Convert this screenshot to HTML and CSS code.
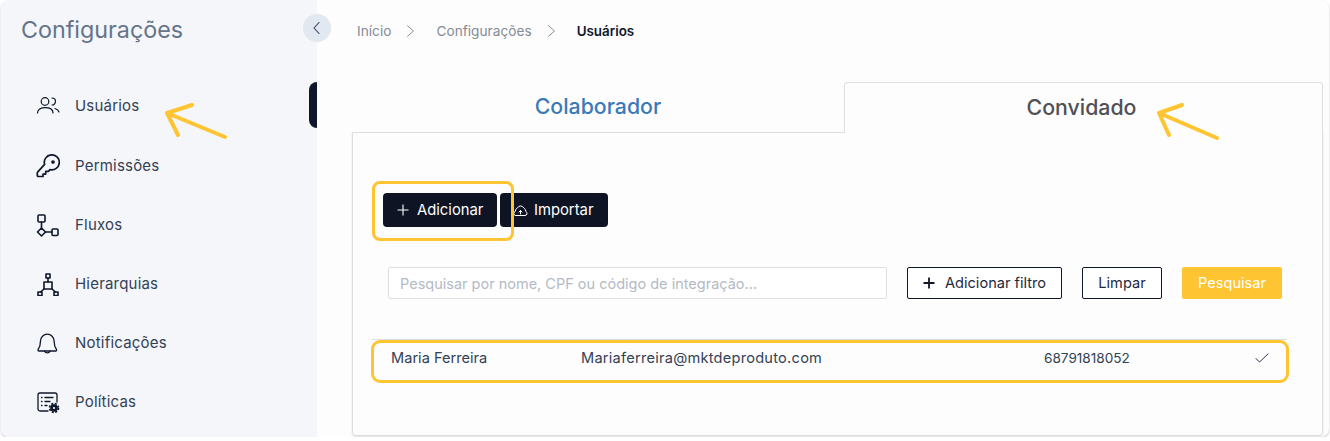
FILE: index.html
```html
<!DOCTYPE html>
<html lang="pt-BR">
<head>
    <meta charset="UTF-8">
    <title>Configurações - Usuários</title>
    <link rel="stylesheet" href="styles.css">
</head>
<body>
    <div class="app">
        <aside class="sidebar">
            <h2 class="sidebar-title">Configurações</h2>
            <span class="active-mark"></span>
            <button class="collapse-btn">
                <svg width="14" height="14" viewBox="0 0 14 14" fill="none" stroke="#334155" stroke-width="1.1" stroke-linecap="round" stroke-linejoin="round"><path d="M9 1.5 4 7l5 5.5"/></svg>
            </button>
            <ul class="nav">
                <li class="nav-item">
                    <svg class="nav-icon" viewBox="0 0 24 24" fill="none" stroke="#0f172a" stroke-width="1.2" stroke-linecap="round" stroke-linejoin="round"><circle cx="9" cy="7.500" r="3.800"/><path d="M1.500 19c0-3.500 3.300-5.300 7.700-5.300S17 15.500 17 19"/><path d="M16 4a3.500 3.500 0 0 1 0 7"/><path d="M19 14.500c2 .6 3.500 1.800 4 3.500"/></svg>
                    <span>Usuários</span>
                </li>
                <li class="nav-item">
                    <svg class="nav-icon" viewBox="0 0 24 24" fill="none" stroke="#0f172a" stroke-width="1.700" stroke-linecap="round" stroke-linejoin="round"><path d="M8.600 10.400a7.500 7.500 0 1 1 5.400 5.200l-1.600 1.800H9.700v2.700H7v2.400H2.300a1 1 0 0 1-1-1v-2.700a1 1 0 0 1 .3-.7z"/><circle cx="17" cy="8" r="1" fill="#0f172a"/></svg>
                    <span>Permissões</span>
                </li>
                <li class="nav-item">
                    <svg class="nav-icon" viewBox="0 0 24 24" fill="none" stroke="#0f172a" stroke-width="1.600" stroke-linecap="round" stroke-linejoin="round"><rect x="2" y="2" width="7" height="7" rx="1"/><path d="M5.500 9v6"/><path d="M5.500 15l4 4-4 4-4-4z"/><path d="M9.500 19H16"/><rect x="16" y="16" width="6" height="6.500" rx="1"/></svg>
                    <span>Fluxos</span>
                </li>
                <li class="nav-item">
                    <svg class="nav-icon" viewBox="0 0 24 24" fill="none" stroke="#0f172a" stroke-width="1.600" stroke-linecap="round" stroke-linejoin="round"><rect x="10" y="2" width="4" height="4"/><path d="M12 6v4"/><rect x="8" y="10" width="8" height="7"/><path d="M8 17l-3.500 3"/><path d="M16 17l3.500 3"/><rect x="2" y="20" width="4" height="3.500"/><rect x="18" y="20" width="4" height="3.500"/></svg>
                    <span>Hierarquias</span>
                </li>
                <li class="nav-item">
                    <svg class="nav-icon" viewBox="0 0 24 24" fill="none" stroke="#0f172a" stroke-width="1.300" stroke-linecap="round" stroke-linejoin="round"><path d="M4.500 10a6.800 6.800 0 0 1 13.600 0c0 5 1.300 7 2.400 8.500.4.600 0 1.500-.8 1.500H2.900c-.8 0-1.200-.9-.8-1.500C3.200 17 4.500 15 4.500 10z"/><path d="M8.500 20a3 3 0 0 0 5.600 0"/></svg>
                    <span>Notificações</span>
                </li>
                <li class="nav-item">
                    <svg class="nav-icon" viewBox="0 0 24 24" fill="none" stroke="#0f172a" stroke-width="1.300" stroke-linecap="round" stroke-linejoin="round"><path d="M12 21H4a2 2 0 0 1-2-2V5a2 2 0 0 1 2-2h15a2 2 0 0 1 2 2v7"/><path d="M9 7.500h8M9 11.500h5M9 15.500h2"/><path d="M5.500 7.500h.5M5.500 11.500h.5M5.500 15.500h.5"/><circle cx="18" cy="18" r="3.800" fill="#0f172a" stroke="none"/><circle cx="18" cy="18" r="4.400" stroke-width="1.800" stroke-dasharray="2 1.500" stroke-linecap="butt"/><circle cx="18" cy="18" r="1.100" fill="#f4f6f9" stroke="none"/></svg>
                    <span>Políticas</span>
                </li>
            </ul>
        </aside>

        <main class="main">
            <nav class="breadcrumb">
                <span>Início</span>
                <svg class="crumb-sep" viewBox="0 0 10 12" fill="none" stroke="#8a8f99" stroke-width="1" stroke-linecap="round" stroke-linejoin="round"><path d="M1.500 .7 7.500 6l-6 5.300"/></svg>
                <span>Configurações</span>
                <svg class="crumb-sep" viewBox="0 0 10 12" fill="none" stroke="#8a8f99" stroke-width="1" stroke-linecap="round" stroke-linejoin="round"><path d="M1.500 .7 7.500 6l-6 5.300"/></svg>
                <strong>Usuários</strong>
            </nav>

            <div class="tabs">
                <div class="tab tab-off">Colaborador</div>
                <div class="tab tab-on">Convidado</div>
            </div>

            <section class="panel">
                <div class="actions">
                    <button class="btn-dark btn-add">
                        <svg width="12" height="12" viewBox="0 0 12 12" stroke="#fff" stroke-width="1.100"><path d="M6 .5v11M.5 6h11"/></svg>
                        Adicionar
                    </button>
                    <button class="btn-dark btn-import">
                        <svg width="15" height="13" viewBox="0 0 15 13" fill="none" stroke="#fff" stroke-width="1" stroke-linejoin="round" stroke-linecap="round"><path d="M4 11.500H2.800a2 2 0 0 1-.6-3.900 4 4 0 0 1 2.300-3.700A3.500 3.500 0 0 1 10.800 4a3.800 3.800 0 0 1 2 3.500 2.100 2.100 0 0 1-.8 4H11"/><path d="M3 11.500h9"/><path d="M7.500 10V6.500M6 8l1.500-1.500L9 8"/></svg>
                        Importar
                    </button>
                </div>

                <div class="filters">
                    <input class="search" type="text" placeholder="Pesquisar por nome, CPF ou código de integração...">
                    <button class="btn-line btn-filter">
                        <svg width="12" height="12" viewBox="0 0 12 12" stroke="#0f172a" stroke-width="1.800"><path d="M6 .5v11M.5 6h11"/></svg>
                        Adicionar filtro
                    </button>
                    <button class="btn-line btn-clear">Limpar</button>
                    <button class="btn-search">Pesquisar</button>
                </div>

                <div class="user-row">
                    <span class="col-name">Maria Ferreira</span>
                    <span class="col-mail">Mariaferreira@mktdeproduto.com</span>
                    <span class="col-cpf">68791818052</span>
                    <svg class="col-check" width="14" height="10" viewBox="0 0 14 10" fill="none" stroke="#2d2f4a" stroke-width="1" stroke-linecap="round" stroke-linejoin="round"><path d="M1 5.500 4.500 9 13 1"/></svg>
                </div>
            </section>
        </main>

        <!-- marcacoes amarelas por cima da tela -->
        <span class="mark mark-add"></span>
        <span class="mark mark-row"></span>
        <svg class="arrow arrow-users" width="64" height="40" viewBox="0 0 64 40" fill="none" stroke="#ffc431" stroke-width="4" stroke-linecap="round" stroke-linejoin="round"><path d="M3 13 61 37M3 13 28 5M3 13 14 35"/></svg>
        <svg class="arrow arrow-guest" width="64" height="40" viewBox="0 0 64 40" fill="none" stroke="#ffc431" stroke-width="4" stroke-linecap="round" stroke-linejoin="round"><path d="M3 12 61 37M3 12 26 4M3 12 13 34"/></svg>
    </div>
</body>
</html>
```

FILE: styles.css
```css
* {
    box-sizing: border-box;
}

body {
    font-family: Inter, "Open Sans", sans-serif;
    background-color: #fff;
    margin: 0;
    overflow: hidden;
}

button {
    font-family: inherit;
    cursor: pointer;
}

.app {
    position: relative;
    display: flex;
    width: 1328px;
    height: 437px;
    margin-left: 1px;
    background-color: #fdfdfd;
    border-radius: 8px;
    box-shadow: 0 1px 2px rgba(0, 0, 0, 0.25);
}

.sidebar {
    position: relative;
    width: 316px;
    flex-shrink: 0;
    padding: 16px 0 0 20px;
    background-color: #f4f6f9;
    border-radius: 8px 0 0 8px;
}

.sidebar-title {
    margin: 0;
    font-size: 23.300px;
    line-height: 28px;
    font-weight: 400;
    color: #64748b;
}

.active-mark {
    position: absolute;
    top: 82px;
    right: 0;
    width: 8px;
    height: 46px;
    background-color: #0f172a;
    border-radius: 8px 0 0 8px;
}

.collapse-btn {
    position: absolute;
    top: 14px;
    left: 302px;
    z-index: 1;
    display: flex;
    align-items: center;
    justify-content: center;
    width: 28px;
    height: 28px;
    padding: 0;
    border: none;
    border-radius: 50%;
    background-color: #e2e8f0;
}

.nav {
    list-style-type: none;
    margin: 31px 0 0;
    padding: 0 0 0 15px;
}

.nav-item {
    display: flex;
    align-items: center;
    gap: 15px;
    height: 59px;
    font-size: 15px;
    letter-spacing: 0.2px;
    color: #334155;
}

.nav-item:first-child {
    height: 61px;
}

.nav-icon {
    width: 24px;
    height: 24px;
    flex-shrink: 0;
}

.main {
    flex: 1;
    padding: 0 11px 1px 35px;
    display: flex;
    flex-direction: column;
}

.breadcrumb {
    display: flex;
    align-items: center;
    height: 62px;
    padding-left: 5px;
    font-size: 13.700px;
    color: #858b96;
}

.breadcrumb strong {
    font-weight: 600;
    font-size: 13.400px;
    color: #0f172a;
}

.crumb-sep {
    width: 10px;
    height: 12px;
    margin: 0 20px 0 15px;
}

.tabs {
    display: flex;
    height: 50px;
    margin-top: 20px;
}

.tab {
    display: flex;
    align-items: center;
    justify-content: center;
    padding-bottom: 2px;
    font-size: 21.300px;
    font-weight: 500;
}

.tab-off {
    width: 492px;
    color: #3b7ab8;
}

.tab-on {
    position: relative;
    z-index: 1;
    flex: 1;
    margin-bottom: -1px;
    padding-right: 4px;
    color: #505055;
    background-color: #fdfdfd;
    border: 1px solid #dedede;
    border-bottom: none;
    border-radius: 4px 4px 0 0;
}

.panel {
    flex: 1;
    padding: 60px 35px 0 30px;
    border: 1px solid #dedede;
    border-radius: 0 0 4px 4px;
    box-shadow: 0 1px 2px rgba(0, 0, 0, 0.12);
}

.actions {
    display: flex;
    gap: 3px;
}

.btn-dark {
    display: flex;
    align-items: center;
    height: 34px;
    border: none;
    border-radius: 4px;
    font-size: 14.800px;
    color: #fff;
    background-color: #0f1424;
}

.btn-add {
    width: 114px;
    gap: 8px;
    padding: 0 0 0 14px;
}

.btn-import {
    width: 108px;
    gap: 6px;
    padding: 0 0 0 13px;
}

.filters {
    display: flex;
    height: 32px;
    margin: 40px 0 0 5px;
}

.search {
    width: 499px;
    padding: 0 11px;
    border: 1px solid #dcdfe4;
    border-radius: 2px;
    font-family: inherit;
    font-size: 14.500px;
    background-color: #fff;
}

.search::placeholder {
    color: #b4bac4;
}

.btn-line {
    display: flex;
    align-items: center;
    justify-content: center;
    font-size: 14.600px;
    color: #1e293b;
    background-color: #fff;
    border: 1px solid #0f172a;
    border-radius: 2px;
}

.btn-filter {
    width: 155px;
    gap: 10px;
    margin-left: 20px;
}

.btn-clear {
    width: 80px;
    margin-left: 20px;
}

.btn-search {
    width: 100px;
    margin-left: 20px;
    border: none;
    border-radius: 2px;
    font-size: 14.600px;
    color: #fff;
    background-color: #ffc431;
}

.user-row {
    display: flex;
    align-items: center;
    width: 915px;
    height: 36px;
    margin: 40px 0 0 -11px;
    padding: 0 0 0 19px;
    border-top: 1px solid #dedede;
    font-size: 14.600px;
    color: #334155;
}

.col-name {
    width: 190px;
}

.col-mail {
    width: 463px;
    letter-spacing: 0.24px;
}

.col-cpf {
    width: 211px;
    font-size: 13.600px;
}

.mark {
    position: absolute;
    border: 3px solid #ffc431;
    border-radius: 8px;
}

.mark-add {
    left: 371px;
    top: 181px;
    width: 142px;
    height: 60px;
}

.mark-row {
    left: 370px;
    top: 340px;
    width: 918px;
    height: 43px;
    border-radius: 9px;
}

.arrow {
    position: absolute;
    z-index: 2;
}

.arrow-users {
    left: 163px;
    top: 100px;
}

.arrow-guest {
    left: 1155px;
    top: 101px;
}
```
